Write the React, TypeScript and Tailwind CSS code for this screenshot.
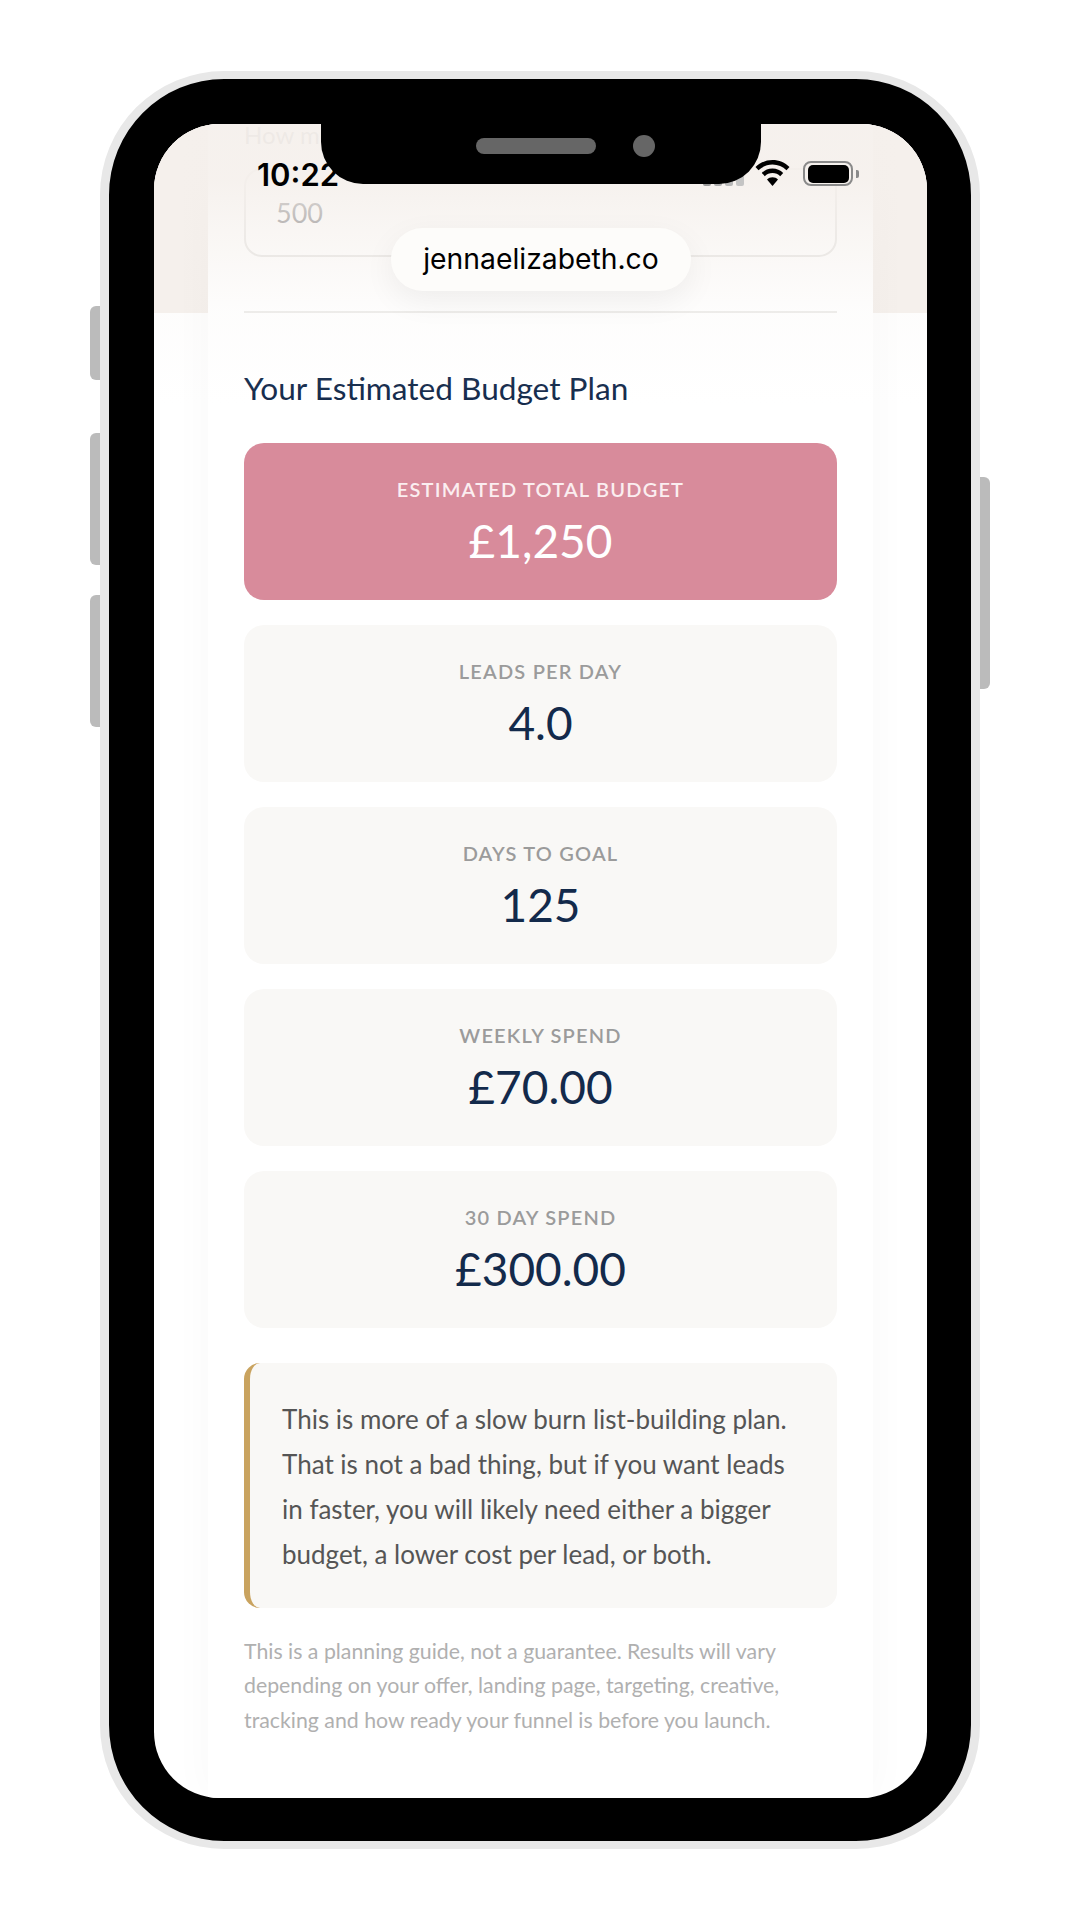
const lato = { fontFamily: '"Lato", "Carlito", sans-serif' };

function StatCard({ label, value, accent }: { label: string; value: string; accent?: boolean }) {
  return (
    <div
      className={
        "flex h-[157px] flex-col items-center rounded-[20px] pt-[34px] " +
        (accent ? "bg-[#d88b9b]" : "bg-[#f9f8f6]")
      }
    >
      <div
        className={
          "text-[20px] leading-[24px] font-semibold tracking-[0.06em] " +
          (accent ? "text-[#fbeef0]" : "text-[#9b9b9b]")
        }
      >
        {label}
      </div>
      <div className={"mt-[12px] text-[46px] leading-[56px] " + (accent ? "text-white" : "text-[#132a4b]")}>
        {value}
      </div>
    </div>
  );
}

function Wifi() {
  return (
    <svg width="35" height="26" viewBox="0 0 35 26" fill="#000">
      <path d="M17.5 0C11 0 5 2.600 0.500 7L3.500 10.300C7.200 6.700 12.100 4.500 17.500 4.500C22.900 4.500 27.800 6.700 31.500 10.300L34.500 7C30 2.600 24 0 17.500 0Z" />
      <path d="M17.500 8.500C13.400 8.500 9.600 10.100 6.800 12.900L9.800 16.200C11.800 14.200 14.500 13 17.500 13C20.500 13 23.200 14.200 25.200 16.200L28.200 12.900C25.400 10.100 21.600 8.500 17.500 8.500Z" />
      <path d="M17.500 26L23 19.500C21.500 18.100 19.600 17.300 17.500 17.300C15.400 17.300 13.500 18.100 12 19.500Z" />
    </svg>
  );
}

export default function App() {
  return (
    <div className="relative h-[1920px] w-[1080px] overflow-hidden bg-white" style={lato}>
      <div className="relative ml-[100px] mt-[71px] h-[1778px] w-[880px]">
        <div className="absolute left-[-10px] top-[235px] h-[74px] w-[12px] rounded-l-[6px] bg-[#bbbbbb]" />
        <div className="absolute left-[-10px] top-[362px] h-[132px] w-[12px] rounded-l-[6px] bg-[#bbbbbb]" />
        <div className="absolute left-[-10px] top-[524px] h-[132px] w-[12px] rounded-l-[6px] bg-[#bbbbbb]" />
        <div className="absolute right-[-10px] top-[406px] h-[212px] w-[12px] rounded-r-[6px] bg-[#bbbbbb]" />

        <div className="relative h-full w-full rounded-[124px] border-x-[9px] border-y-[8px] border-[#e8e8e8] bg-black pb-[43px] pl-[45px] pr-[44px] pt-[45px]">
          <div className="relative h-full w-full overflow-hidden rounded-[66px] bg-white">
            {/* beige page behind the white column */}
            <div className="absolute inset-x-0 top-0 h-[189px] bg-[#f5f0ec]" />

            <div className="relative mx-[54px] h-full bg-white px-[36px] shadow-[0_0_40px_rgba(0,0,0,0.03)]">
              <div className="pt-[1px] text-[24px] leading-[20px] text-[#8a8a8a]">How much</div>
              <div className="mt-[23px] flex h-[89px] items-start rounded-[18px] border-2 border-[#e3e2e0] pl-[30px] pt-[27px] text-[27px] leading-[32px] text-[#555559]">
                500
              </div>
              <div className="mt-[54px] h-[2px] bg-[#ecebe9]" />

              <h2 className="mt-[55px] text-[31.6px] leading-[40px] text-[#132a4b]">Your Estimated Budget Plan</h2>

              <div className="mt-[35px] flex flex-col gap-[25px]">
                <StatCard accent label="ESTIMATED TOTAL BUDGET" value="£1,250" />
                <StatCard label="LEADS PER DAY" value="4.0" />
                <StatCard label="DAYS TO GOAL" value="125" />
                <StatCard label="WEEKLY SPEND" value="£70.00" />
                <StatCard label="30 DAY SPEND" value="£300.00" />
              </div>

              <div className="mt-[35px] h-[245px] rounded-[16px] border-l-[6px] border-[#c9a35f] bg-[#f9f8f6] pl-[32px] pt-[34px] text-[26px] leading-[45px] text-[#555555]">
                This is more of a slow burn list-building plan.
                <br />
                That is not a bad thing, but if you want leads
                <br />
                in faster, you will likely need either a bigger
                <br />
                budget, a lower cost per lead, or both.
              </div>

              <p className="mt-[26px] text-[21.3px] leading-[34.4px] text-[#b0b0b0]">
                This is a planning guide, not a guarantee. Results will vary
                <br />
                depending on your offer, landing page, targeting, creative,
                <br />
                tracking and how ready your funnel is before you launch.
              </p>

              <p className="mt-[50px] text-[26px] leading-[45px] text-[#555555]">
                Would you rather have someone walk you through it?
              </p>
            </div>

            {/* fade over the top of the page */}
            <div className="absolute inset-x-0 top-0 h-[280px] bg-[linear-gradient(to_bottom,rgba(245,240,236,0.94)_0%,rgba(245,240,236,0.9)_20%,rgba(245,240,236,0.6)_38%,rgba(245,240,236,0.15)_67%,rgba(245,240,236,0)_100%)]" />
          </div>

          {/* status bar and url pill */}
          <div
            className="absolute left-[148px] top-[78px] text-[31px] leading-[36px] font-semibold text-black"
            style={{ fontFamily: '"Inter", sans-serif' }}
          >
            10:22
          </div>
          <div className="absolute left-[594px] top-[91px] flex h-[16px] items-end gap-[3px]">
            <div className="h-[8px] w-[8px] rounded-[2px] bg-[#999999]" />
            <div className="h-[10px] w-[8px] rounded-[2px] bg-[#aaaaaa]" />
            <div className="h-[12px] w-[8px] rounded-[2px] bg-[#b8b8b8]" />
            <div className="h-[15px] w-[8px] rounded-[2px] bg-[#c4c4c4]" />
          </div>
          <div className="absolute left-[646px] top-[81px] flex items-center">
            <Wifi />
          </div>
          <div className="absolute left-[694px] top-[82px] flex items-center gap-[3px]">
            <div className="flex h-[25px] w-[50px] items-center justify-center rounded-[8px] border-2 border-[#8a8a8a]">
              <div className="h-[18px] w-[41px] rounded-[5px] bg-black" />
            </div>
            <div className="h-[8px] w-[3px] rounded-r-[2px] bg-[#8a8a8a]" />
          </div>

          <div className="absolute left-[212px] top-0 flex h-[105px] w-[440px] items-start justify-center gap-[37px] rounded-b-[42px] bg-black pl-[49px] pt-[59px]">
            <div className="h-[16px] w-[120px] rounded-full bg-[#666666]" />
            <div className="mt-[-3px] h-[22px] w-[22px] rounded-full bg-[#666666]" />
          </div>

          <div
            className="absolute left-[282px] top-[149px] flex h-[63px] w-[300px] items-center justify-center rounded-[32px] bg-[#fdfcfa] text-[28.3px] text-black shadow-[0_10px_32px_rgba(0,0,0,0.06)]"
            style={{ fontFamily: '"Inter", sans-serif' }}
          >
            jennaelizabeth.co
          </div>
        </div>
      </div>
    </div>
  );
}
